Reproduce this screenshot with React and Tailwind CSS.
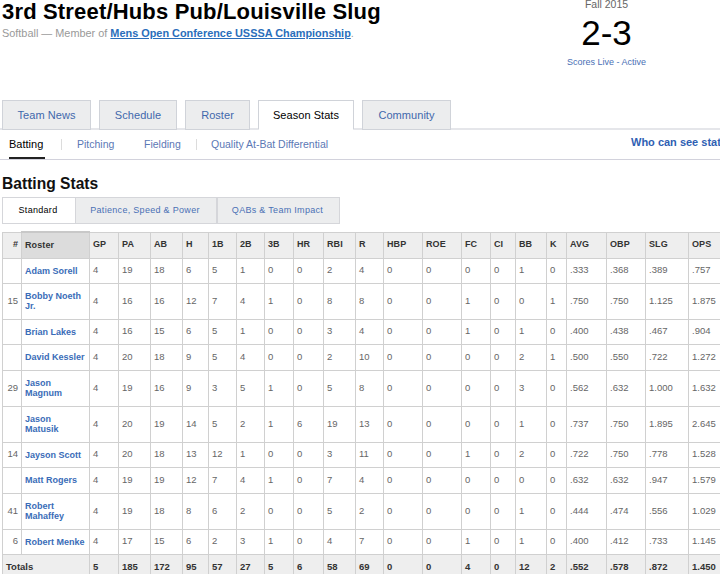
const widths = [19, 68, 29, 32, 32, 26, 28, 28, 29, 30, 32, 28, 39, 39, 29, 25, 31, 20, 40, 39, 43, 40];
const heads = ["#", "Roster", "GP", "PA", "AB", "H", "1B", "2B", "3B", "HR", "RBI", "R", "HBP", "ROE", "FC", "CI", "BB", "K", "AVG", "OBP", "SLG", "OPS"];
const rows = [
  [25, "", "Adam Sorell", "4 19 18 6 5 1 0 0 2 4 0 0 0 0 1 0 .333 .368 .389 .757"],
  [36, "15", "Bobby Noeth Jr.", "4 16 16 12 7 4 1 0 8 8 0 0 1 0 0 1 .750 .750 1.125 1.875"],
  [25, "", "Brian Lakes", "4 16 15 6 5 1 0 0 3 4 0 0 1 0 1 0 .400 .438 .467 .904"],
  [26, "", "David Kessler", "4 20 18 9 5 4 0 0 2 10 0 0 0 0 2 1 .500 .550 .722 1.272"],
  [36, "29", "Jason Magnum", "4 19 16 9 3 5 1 0 5 8 0 0 0 0 3 0 .562 .632 1.000 1.632"],
  [36, "", "Jason Matusik", "4 20 19 14 5 2 1 6 19 13 0 0 0 0 1 0 .737 .750 1.895 2.645"],
  [25, "14", "Jayson Scott", "4 20 18 13 12 1 0 0 3 11 0 0 1 0 2 0 .722 .750 .778 1.528"],
  [26, "", "Matt Rogers", "4 19 19 12 7 4 1 0 7 4 0 0 0 0 0 0 .632 .632 .947 1.579"],
  [36, "41", "Robert Mahaffey", "4 19 18 8 6 2 0 0 5 2 0 0 0 0 1 0 .444 .474 .556 1.029"],
  [25, "6", "Robert Menke", "4 17 15 6 2 3 1 0 4 7 0 0 1 0 1 0 .400 .412 .733 1.145"],
];
const totals = "5 185 172 95 57 27 5 6 58 69 0 0 4 0 12 2 .552 .578 .872 1.450".split(" ");

const tabCls = "h-[30px] shrink-0 flex items-center justify-center border text-[11px] tracking-[0.05px]";
const idle = "bg-[#ecedee] border-[#d0d3d9] text-[#3f68ac]";

export default function App() {
  return (
    <div className="w-[720px] h-[574px] overflow-hidden bg-white font-['Liberation_Sans',Arial,sans-serif]">
      <div className="flex h-[100px] pl-[2px]">
        <div className="w-[540px] shrink-0">
          <h1 className="text-[22px] leading-[24px] font-bold text-black whitespace-nowrap tracking-[0.17px]">3rd Street/Hubs Pub/Louisville Slug</h1>
          <p className="text-[10.9px] leading-[12px] mt-[3px] text-[#999] whitespace-nowrap">
            Softball — Member of <a className="font-bold text-[#2a6ebb] underline">Mens Open Conference USSSA Championship</a>.
          </p>
        </div>
        <div className="w-[129px] text-center -mt-[2px]">
          <div className="text-[10.5px] leading-[12px] text-[#666]">Fall 2015</div>
          <div className="text-[35px] leading-[36px] text-black mt-[5px]">2-3</div>
          <div className="text-[9px] leading-[11px] mt-[6px] text-[#4a6fb5]">Scores Live - Active</div>
        </div>
      </div>

      <div className="flex gap-[8px] pl-[2px] h-[30px] border-b-2 border-[#e5e6ea]">
        <div className={`${tabCls} ${idle} w-[89px]`}>Team News</div>
        <div className={`${tabCls} ${idle} w-[78px]`}>Schedule</div>
        <div className={`${tabCls} ${idle} w-[65px]`}>Roster</div>
        <div className={`${tabCls} bg-white border-[#d0d3d9] border-b-white text-black w-[96px]`}>Season Stats</div>
        <div className={`${tabCls} ${idle} w-[89px]`}>Community</div>
      </div>

      <div className="flex h-[30px] border-b border-[#d2d2dc] text-[10.5px] text-[#5b78b5] whitespace-nowrap relative">
        <div className="ml-[9px] w-[36px] h-[29px] border-b-2 border-[#222] text-black pt-[8px] leading-[13px] font-normal text-[11px]">Batting</div>
        <div className="ml-[16px] mt-[9px] w-px h-[11px] bg-[#dcdcdc]"></div>
        <div className="ml-[15px] w-[67px] pt-[8px] leading-[13px]">Pitching</div>
        <div className="w-[52px] pt-[8px] leading-[13px]">Fielding</div>
        <div className="mt-[9px] w-px h-[11px] bg-[#dcdcdc]"></div>
        <div className="ml-[14px] w-[420px] pt-[8px] leading-[13px]">Quality At-Bat Differential</div>
        <div className="absolute left-[631px] top-[6px] leading-[13px] text-[11px] text-[#2f5fb3] font-bold">Who can see stats?</div>
      </div>

      <h2 className="ml-[2px] mt-[15px] text-[15.6px] leading-[18px] font-bold text-[#111]">Batting Stats</h2>

      <div className="ml-[2px] mt-[4px] w-[338px] h-[27px] flex border border-[#d5d6da] text-[9px] text-[#4a70b5] tracking-[0.3px]">
        <div className="w-[72px] pr-[2px] flex items-center justify-center bg-white text-black">Standard</div>
        <div className="w-[141px] pr-[2px] flex items-center justify-center bg-[#ecedee] border-l border-[#d5d6da]">Patience, Speed &amp; Power</div>
        <div className="flex-1 pr-[2px] flex items-center justify-center bg-[#ecedee] border-l-2 border-[#d5d6da]">QABs &amp; Team Impact</div>
      </div>

      <table className="ml-[2px] mt-[7px] table-fixed border-collapse text-[9.5px] text-[#555]" style={{ width: 726 }}>
        <colgroup>
          {widths.map((w, i) => <col key={i} style={{ width: w }} />)}
        </colgroup>
        <thead>
          <tr className="h-[26px] bg-[#eeeeee] text-[#333] text-[9px] tracking-[0.1px]">
            {heads.map((h, i) => (
              <th key={i} className={`border border-[#d0d0d0] font-bold ${i === 0 ? "text-right pr-[3px]" : "text-left pl-[3px]"} ${i === 1 ? "bg-[#dcdcdc] border-t-2 border-t-[#c8c8c8]" : ""}`}>{h}</th>
            ))}
          </tr>
        </thead>
        <tbody>
          {rows.map(([height, num, name, vals]) => (
            <tr key={name} style={{ height }}>
              <td className="border border-[#d0d0d0] text-right pr-[3px] text-[#666]">{num}</td>
              <td className="border border-[#d0d0d0] pl-[3px] pr-[4px] text-[9px] leading-[10px] text-[#3a6cb8] font-bold">{name}</td>
              {vals.split(" ").map((v, i) => (
                <td key={i} className="border border-[#d0d0d0] pl-[3px] text-[#666]">{v}</td>
              ))}
            </tr>
          ))}
          <tr className="h-[26px] bg-[#eeeeee] font-bold text-[#333]">
            <td colSpan={2} className="border border-[#d0d0d0] pl-[3px]">Totals</td>
            {totals.map((v, i) => (
              <td key={i} className="border border-[#d0d0d0] pl-[3px]">{v}</td>
            ))}
          </tr>
        </tbody>
      </table>
    </div>
  );
}
